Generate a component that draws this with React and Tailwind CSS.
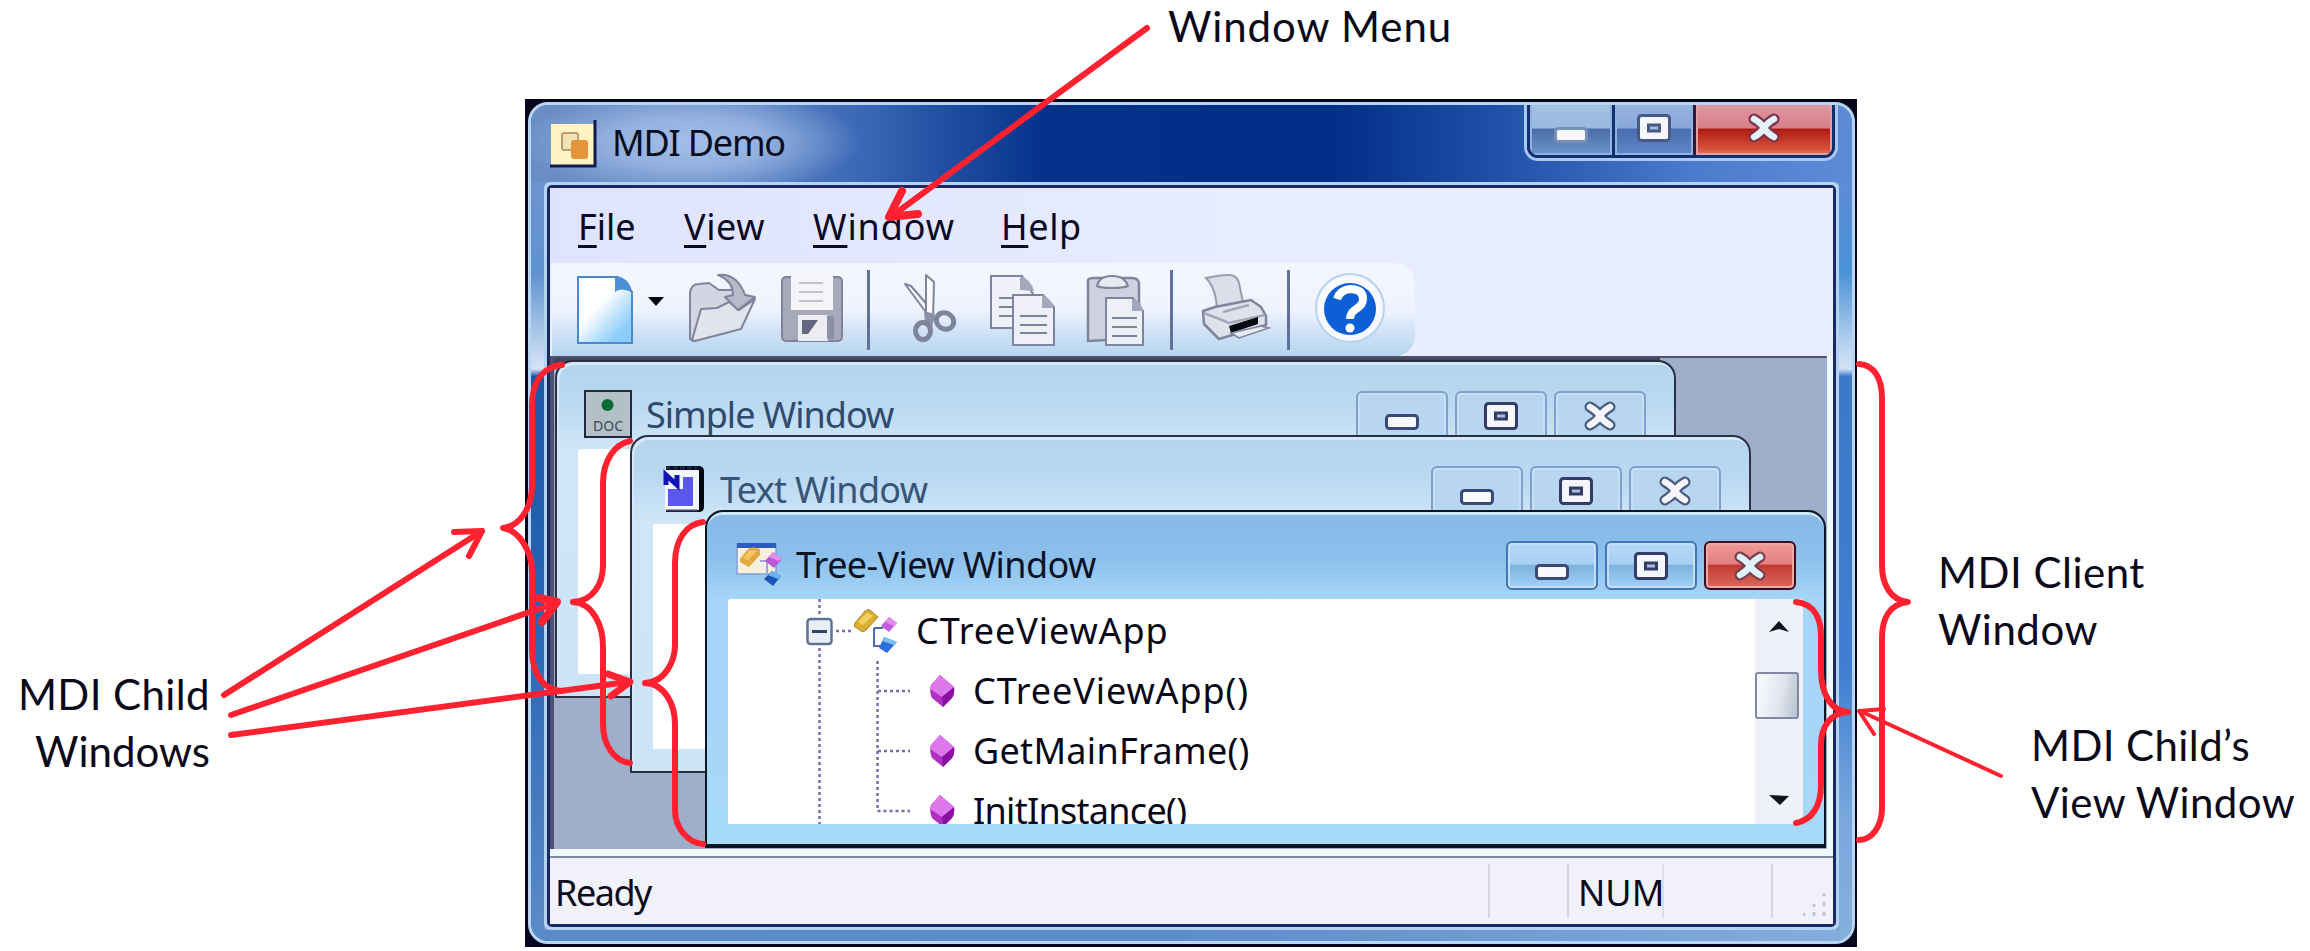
import React from 'react';

const FONT = "font-['Noto_Sans','Open_Sans',sans-serif]";

function MinGlyph({ dark }) {
  return (
    <svg width="34" height="50" viewBox="0 0 34 50" className="block">
      <rect x="1.5" y="24.5" width="31" height="13" rx="3" fill="#f6f8fd" stroke={dark} strokeWidth="3" />
    </svg>
  );
}

function MaxGlyph({ dark }) {
  return (
    <svg width="34" height="50" viewBox="0 0 34 50" className="block">
      <rect x="1.5" y="12.5" width="31" height="25" rx="3" fill="#f4f6fb" stroke={dark} strokeWidth="3" />
      <rect x="11.5" y="22" width="11" height="6" fill="#a9bcd8" stroke={dark} strokeWidth="3" />
    </svg>
  );
}

function CloseGlyph({ dark, fill = '#f4f6fb' }) {
  return (
    <svg width="34" height="50" viewBox="0 0 34 50" className="block">
      <g fill="none" strokeLinecap="round">
        <path d="M7 16 Q14 20 17 25 Q20 30 27 34 M27 16 Q20 20 17 25 Q14 30 7 34" stroke={dark} strokeWidth="11" />
        <path d="M7 16 Q14 20 17 25 Q20 30 27 34 M27 16 Q20 20 17 25 Q14 30 7 34" stroke={fill} strokeWidth="6.5" />
      </g>
    </svg>
  );
}

function ChildButtons({ active }) {
  const base = 'flex h-[49px] w-[92px] items-center justify-center rounded-[6px] border-2';
  const plain = active
    ? ' border-[#4374b4] bg-[linear-gradient(180deg,#b5d8f6_0%,#a8cff2_47%,#7db2e0_50%,#a4d2f5_100%)] shadow-[inset_0_0_0_2px_#c4e0f8]'
    : ' border-[#7f9fcd] bg-[#b9d6f0] shadow-[inset_0_0_0_2px_#c8e0f5]';
  const close = active
    ? ' border-[#3a1020] bg-[linear-gradient(180deg,#f09a98_0%,#e38080_46%,#c23a30_50%,#dc6a5c_100%)] shadow-[inset_0_0_0_2px_#f0a8a4]'
    : plain;
  return (
    <div className="mt-[29px] mr-[28px] flex gap-[7px]">
      <div className={base + plain}><MinGlyph dark="#3a4a78" /></div>
      <div className={base + plain}><MaxGlyph dark="#333c66" /></div>
      <div className={base + close}><CloseGlyph dark={active ? '#7a4050' : '#4a5a80'} fill={active ? '#dff0fb' : '#f4f6fb'} /></div>
    </div>
  );
}

function DocIcon() {
  return (
    <svg width="48" height="48" viewBox="0 0 48 48">
      <rect x="1" y="1" width="46" height="46" fill="#b4c0c8" stroke="#23283c" strokeWidth="2" />
      <circle cx="23.500" cy="15" r="6" fill="#0b6b34" />
      <text x="24" y="41" textAnchor="middle" fontSize="14" fontFamily="Noto Sans, sans-serif" fill="#3c4850">DOC</text>
    </svg>
  );
}

function NoteIcon() {
  return (
    <svg width="42" height="48" viewBox="0 0 42 48">
      <path d="M3 1 H37 Q41 2 41 6 V43 Q40 47 36 47 H3 V42 H33 V6 H3 Z" fill="#050510" />
      <rect x="2" y="5" width="34" height="40" fill="#f4f6ff" />
      <path d="M3 3 H34" stroke="#202848" strokeWidth="3" strokeDasharray="5 2" />
      <path d="M20 12 H30 V41 H5 V24 H20 Z" fill="#5b58ee" />
      <path d="M3 20 V10 L14 20 V10" stroke="#1414b4" strokeWidth="5" fill="none" />
      <path d="M3 45.500 H34" stroke="#3a4470" strokeWidth="2" />
    </svg>
  );
}

function ClassIcon() {
  return (
    <svg width="46" height="46" viewBox="0 0 46 46">
      <path d="M21 20 H30 M21 20 V38 H31" fill="none" stroke="#4a6ab8" strokeWidth="2" />
      <path d="M2 15 L12 3 Q15 1 17 2 L25 9 L13 22 Q10 25 8 23 L1 18 Z" fill="#dcae34" stroke="#a88428" strokeWidth="1" />
      <path d="M5 14 L14 5 L20 8 L10 17 Z" fill="#f2cf60" />
      <path d="M36 9 L44 15 L36 24 L28 18 Z" fill="#c35cdc" />
      <path d="M36 9 L44 15 L41 18 L32 14 Z" fill="#e28cf0" />
      <path d="M31 29 L44 34 L34 45 L26 40 Z" fill="#2a6fdc" />
      <path d="M31 29 L44 34 L41 37 L29 33 Z" fill="#7fc0f4" />
    </svg>
  );
}

function TreeWinIcon() {
  return (
    <svg width="48" height="46" viewBox="0 0 48 46">
      <rect x="1" y="2" width="39" height="30" fill="#f8f0dc" stroke="#7fa0d8" strokeWidth="1.500" />
      <rect x="1" y="1" width="39" height="5" fill="#2a5cc0" />
      <path d="M4 17 L12 7 Q17 4 24 7 L24 13 L13 25 L4 20 Z" fill="#e2aa3c" />
      <path d="M7 16 L14 8 L21 9 L12 18 Z" fill="#f0c868" />
      <path d="M24 19 H31 V31" stroke="#98a4e0" strokeWidth="2" fill="none" />
      <path d="M37 10 L46 17 L38 26 L29 19 Z" fill="#bf55d8" />
      <path d="M37 10 L46 17 L42 19 L33 15 Z" fill="#e090f0" />
      <path d="M36 29 L45 34 L37 44 L28 37 Z" fill="#1c56b8" />
      <path d="M36 29 L45 34 L42 37 L32 33 Z" fill="#6fb4ec" />
    </svg>
  );
}

function ChildWindow({ className, icon, title, titleClass, active, children }) {
  return (
    <section
      className={
        'absolute flex h-[338px] w-[1121px] flex-col overflow-hidden rounded-t-[18px] border-2 ' +
        (active
          ? 'border-b-[4px] border-[#081626] bg-[linear-gradient(180deg,#86b9e6_0%,#8cc0ec_14%,#a6d5f7_26%,#a6d8f8_100%)] shadow-[inset_0_4px_0_-1px_#cfe8fb] '
          : 'border-[#2c3044] bg-[linear-gradient(180deg,#b4d3ee_0%,#b9d8f1_12%,#cfe6f8_26%,#cde3f6_100%)] shadow-[inset_2px_3px_0_0_#d3e8f8] ') +
        className
      }
    >
      <header className="flex h-[87px] shrink-0">
        {icon}
        <h2 className={'mt-[26px] text-[36px] leading-[54px] whitespace-nowrap ' + titleClass}>{title}</h2>
        <div className="flex-1" />
        <ChildButtons active={active} />
      </header>
      <div className={'relative mx-[21px] h-[225px] rounded-t-[3px] bg-white ' + (active ? 'overflow-hidden' : '')}>{children}</div>
    </section>
  );
}

function Diamond() {
  return (
    <svg width="26" height="34" viewBox="0 0 26 34">
      <path d="M11 1 L25 13 Q26 20 23 24 L14 33 L3 24 Q0 18 2 11 Z" fill="#b030c4" />
      <path d="M11 1 L25 13 L13 23 L1 15 L2 11 Z" fill="#dd78ea" />
      <path d="M13 23 L25 13 Q26 20 23 24 L14 33 Z" fill="#8a10a4" />
    </svg>
  );
}

function TreeRow({ label, tracking }) {
  return (
    <div className="flex h-[60px] items-center">
      <div className="ml-[201px] w-[44px]"><Diamond /></div>
      <span className={'text-[36px] leading-[60px] whitespace-nowrap ' + tracking}>{label}</span>
    </div>
  );
}

function TreeView() {
  return (
    <div className="flex h-full text-[#080818]">
      <div className="relative flex-1">
        <svg className="absolute top-0 left-0" width="200" height="225" viewBox="0 0 200 225">
          <g stroke="#7a6cac" strokeWidth="2.500" strokeDasharray="3 3" fill="none">
            <path d="M91.500 0 V17 M91.500 49 V225" />
            <path d="M108 32 H124" />
            <path d="M149.500 62 V212 H182 M150 92 H182 M150 152 H182" />
          </g>
          <rect x="79.500" y="20" width="24" height="25" rx="3" fill="#e8eff6" stroke="#5c7396" strokeWidth="2.500" />
          <path d="M84 32.500 H99" stroke="#304468" strokeWidth="3" />
        </svg>
        <div className="mt-[2px] flex h-[60px] items-center">
          <div className="ml-[125px] w-[63px]"><ClassIcon /></div>
          <span className="text-[36px] leading-[60px] tracking-[0.900px]">CTreeViewApp</span>
        </div>
        <TreeRow label="CTreeViewApp()" tracking="tracking-[0.900px]" />
        <TreeRow label="GetMainFrame()" tracking="tracking-[0.300px]" />
        <TreeRow label="InitInstance()" tracking="tracking-[-0.700px]" />
      </div>
      <div className="flex w-[48px] flex-col items-center bg-[#eff1f9]">
        <svg className="mt-[22px]" width="20" height="12" viewBox="0 0 20 12"><path d="M10 0 L20 11 L10 8 L0 11 Z" fill="#10141e" /></svg>
        <div className="mt-[39px] mr-[4px] h-[47px] w-[44px] rounded-[3px] border-2 border-[#8288a4] bg-[linear-gradient(100deg,#f6f8fc_10%,#dfe4ec_60%,#b8c0ce_100%)]" />
        <svg className="mt-[76px]" width="20" height="11" viewBox="0 0 20 11"><path d="M0 0 L20 1 L11 10 Z" fill="#10141e" /></svg>
      </div>
    </div>
  );
}

function Sep({ className }) {
  return <div className={'h-[80px] w-[3px] bg-[#62719c] ' + className} />;
}

const G = '#7e849c';

function Toolbar() {
  return (
    <div className="flex h-[93px] bg-[#e8edff] pl-[2px]">
      <div className="flex h-full w-[863px] items-center rounded-r-[20px] bg-[linear-gradient(180deg,#f4f6ff_0%,#f0f3ff_50%,#cfe2f6_75%,#b6d6ef_100%)] pl-[24px]">
        <svg width="58" height="70" viewBox="0 0 58 70">
          <defs>
            <linearGradient id="page" x1="0.100" y1="0.100" x2="0.900" y2="1">
              <stop offset="0.350" stopColor="#fff" />
              <stop offset="0.850" stopColor="#8accfa" />
            </linearGradient>
          </defs>
          <path d="M2 2 H42 L56 17 V68 H2 Z" fill="url(#page)" stroke="#4a8ace" strokeWidth="2" />
          <path d="M39 2 H45 Q55 7 56 17 Q44 12 39 17 Z" fill="#4b8fd4" />
        </svg>
        <svg className="-mt-[16px] ml-[14px]" width="16" height="10" viewBox="0 0 16 10"><path d="M0 0 H16 L8 9 Z" fill="#05050c" /></svg>
        <svg className="ml-[23px] -mt-[4px]" width="70" height="70" viewBox="0 0 70 70">
          <path d="M3 66 V20 Q4 11 12 11 L22 10 L32 17 H46 L54 38 L50 56 L6 68 Z" fill="#d3d6e2" stroke={G} strokeWidth="2" />
          <path d="M5 67 L14 36 L30 35 L42 29 L52 37 L68 26 L54 56 L8 68 Z" fill="#e2e4ec" stroke={G} strokeWidth="2" strokeLinejoin="round" />
          <path d="M31 2 Q50 0 58 22 L68 24 L51 37 L38 24 L46 22 Q46 8 31 2 Z" fill="#b7bac8" stroke={G} strokeWidth="2" strokeLinejoin="round" />
        </svg>
        <svg className="-mt-[2px] ml-[23px]" width="64" height="68" viewBox="0 0 64 68">
          <rect x="2" y="2" width="60" height="64" rx="4" fill="#a6a9ba" stroke={G} strokeWidth="2" />
          <rect x="11" y="1" width="42" height="34" fill="#f4f4f9" />
          <path d="M19 8 H43 M19 17 H43 M19 26 H43" stroke="#bfc1cc" strokeWidth="2" />
          <rect x="18" y="40" width="30" height="26" fill="#ececf2" />
          <path d="M22 45 H38 L28 59 H22 Z" fill="#62667e" />
          <path d="M47 41 H54 V64 H47 Z" fill="#8c90a4" />
        </svg>
        <Sep className="ml-[23px]" />
        <svg className="ml-[32px] -mt-[4px]" width="56" height="70" viewBox="0 0 56 70">
          <path d="M3 11 L26 42 L28 35 L9 13 Z" fill="#fafaff" stroke={G} strokeWidth="2" strokeLinejoin="round" />
          <path d="M24 2 L32 9 L31 46 L24 42 Z" fill="#fafaff" stroke={G} strokeWidth="2" strokeLinejoin="round" />
          <path d="M22 38 L33 41 L30 55 L23 50 Z" fill="#8c91a8" />
          <ellipse cx="21" cy="58" rx="7.500" ry="8.500" fill="none" stroke={G} strokeWidth="5" />
          <ellipse cx="43" cy="48" rx="9" ry="8" transform="rotate(35 43 48)" fill="none" stroke={G} strokeWidth="5" />
        </svg>
        <svg className="ml-[31px]" width="67" height="72" viewBox="0 0 67 72">
          <path d="M2 2 H33 L44 20 V54 H2 Z" fill="#eff0f8" stroke={G} strokeWidth="2" />
          <path d="M31 2 Q42 5 45 17 L31 16 Z" fill="#a3a7bc" />
          <path d="M10 24 H24 M10 33 H24 M10 42 H24" stroke={G} strokeWidth="2" />
          <path d="M24 21 H54 L65 33 V71 H24 Z" fill="#eff0f7" stroke={G} strokeWidth="2" />
          <path d="M53 21 Q63 25 65 34 L53 34 Z" fill="#a3a7bc" />
          <path d="M31 42 H58 M31 51 H58 M31 59 H58" stroke={G} strokeWidth="2" />
        </svg>
        <svg className="ml-[29px]" width="60" height="72" viewBox="0 0 60 72">
          <path d="M3 6 Q4 4 9 4 H47 Q53 4 54 9 V66 H22 L3 67 Z" fill="#ced1de" stroke={G} strokeWidth="2.500" />
          <path d="M12 12 Q14 2 27 2 Q40 2 43 12 Q38 14 27 14 Q16 14 12 12 Z" fill="#e8e9f1" stroke={G} strokeWidth="2" />
          <path d="M21 24 H48 L58 37 V71 H21 Z" fill="#eff0f7" stroke={G} strokeWidth="2" />
          <path d="M47 24 Q57 28 58 37 H47 Z" fill="#a3a7bc" />
          <path d="M27 44 H52 M27 53 H52 M27 62 H52" stroke={G} strokeWidth="2" />
        </svg>
        <Sep className="ml-[25px]" />
        <svg className="ml-[28px] -mt-[6px]" width="70" height="68" viewBox="0 0 70 68">
          <path d="M5 5 Q20 2 26 2 Q36 1 38 10 L43 34 L16 40 Q16 16 5 5 Z" fill="#dcdfe9" stroke="#9a9caf" strokeWidth="2" />
          <path d="M2 38 L14 34 L50 27 L60 34 L65 43 V52 L18 66 L3 51 Z" fill="#dfe1eb" stroke={G} strokeWidth="2.500" strokeLinejoin="round" />
          <path d="M22 39 L48 32 M3 40 L28 50 L64 42" stroke="#a4a8ba" strokeWidth="2.500" fill="none" />
          <path d="M28 53 L57 44 V51 L30 60 Z" fill="#0a0a14" />
          <path d="M30 60 L60 53 L68 55 L38 65 Z" fill="#e9eaf2" stroke={G} strokeWidth="1.500" />
        </svg>
        <Sep className="ml-[16px]" />
        <svg className="-mt-[3px] ml-[24px]" width="72" height="72" viewBox="0 0 72 72">
          <circle cx="36" cy="36" r="34" fill="#f8f8ff" stroke="#b5d2f0" strokeWidth="2" />
          <circle cx="36" cy="37" r="26" fill="#0c5fd4" />
          <path d="M23 27 Q26 18 36 17 Q49 17 49 27 Q49 33 42 37 Q36 41 36 47" fill="none" stroke="#fff" strokeWidth="8" />
          <circle cx="36" cy="56" r="4.500" fill="#fff" />
        </svg>
      </div>
    </div>
  );
}

function MenuItem({ first, rest, className }) {
  return (
    <span className={'text-[36px] leading-[77px] whitespace-nowrap ' + className}>
      <span className="underline decoration-[3px] underline-offset-[5px]">{first}</span>{rest}
    </span>
  );
}

function CaptionButtons() {
  return (
    <div className="mt-[-4px] mr-[14px] flex h-[60px] rounded-b-[14px] border-x-[3px] border-b-[3px] border-[#a9c8f2]">
      <div className="flex overflow-hidden rounded-b-[11px] border-x-[3px] border-b-[3px] border-[#12306e]">
        <div className="flex w-[82px] justify-center bg-[linear-gradient(180deg,#a6c2e4_0%,#9ab9df_50%,#4a6da8_52%,#6d93cc_100%)] pt-[3px] shadow-[inset_0_0_0_2px_#8fb4e4]">
          <MinGlyph dark="#7890b8" />
        </div>
        <div className="w-[3px] bg-[#12306e]" />
        <div className="flex w-[78px] justify-center bg-[linear-gradient(180deg,#9ab6e0_0%,#88a8da_50%,#4a6cae_52%,#6288ca_100%)] pt-[2px] shadow-[inset_0_0_0_2px_#8fb4e4]">
          <MaxGlyph dark="#465a88" />
        </div>
        <div className="w-[3px] bg-[#321838]" />
        <div className="flex w-[136px] justify-center bg-[linear-gradient(180deg,#e09aa4_0%,#d8808a_50%,#ae1a14_52%,#d8503a_88%,#e07860_100%)] pt-[2px] shadow-[inset_0_0_0_2px_#e0a0a4]">
          <CloseGlyph dark="#7d3348" fill="#e4f2fb" />
        </div>
      </div>
    </div>
  );
}

function MainWindow() {
  return (
    <main className="mt-[99px] ml-[525px] h-[848px] w-[1332px] bg-[#06061c] pt-[3px] pr-[2px] pb-[3px] pl-[3px]">
      <div className="flex h-full flex-col overflow-hidden rounded-[20px] border-[3px] border-[#b9d5f4] bg-[#6b96d2]">
        <header className="flex h-[77px] shrink-0 bg-[radial-gradient(ellipse_170px_56px_at_160px_37px,rgba(170,196,236,0.9)_0%,rgba(165,192,234,0.75)_45%,rgba(120,155,215,0)_100%),linear-gradient(90deg,#6a8ec4_0%,#5a80c0_16%,#3b68b6_25%,#1d4ca0_32%,#04328b_39%,#002d86_60%,#1f4fa8_73%,#4b7bcc_88%,#5d8cd6_100%)]">
          <svg className="mt-[15px] ml-[18px]" width="49" height="49" viewBox="0 0 49 49">
            <rect x="2" y="4" width="44" height="42" fill="#fff3c2" />
            <path d="M46 0 V46 H1" fill="none" stroke="#101a4c" strokeWidth="3" />
            <rect x="13" y="13" width="16" height="17" rx="2" fill="#f3e2b4" stroke="#bb9c6c" strokeWidth="2" />
            <rect x="22" y="20" width="17" height="19" rx="3" fill="#e2953a" />
          </svg>
          <h1 className="mt-[10px] ml-[14px] text-[36px] leading-[56px] tracking-[-1.200px] whitespace-nowrap text-[#080c20]">MDI Demo</h1>
          <div className="flex-1" />
          <CaptionButtons />
        </header>
        <div className="flex h-[748px] shrink-0">
          <div className="w-[13px] bg-[linear-gradient(180deg,#6e93cf_0%,#5f92d0_12%,#c5daf1_23%,#d5e4f4_25%,#1d56a4_26%,#2a66b4_60%,#5b8ac8_100%)]" />
          <div className="w-[1295px] rounded-[6px] bg-[#b3d2f4] p-[3px]">
            <div className="h-[742px] rounded-[5px] border-[3px] border-[#1a2a60] bg-[#eef8ff]">
              <nav className="flex h-[75px] bg-[linear-gradient(90deg,#dfe3fd_0%,#e8edff_60%)] pl-[28px] text-[#0a0a24]">
                <MenuItem first="F" rest="ile" className="w-[106px]" />
                <MenuItem first="V" rest="iew" className="w-[129px] tracking-[0.600px]" />
                <MenuItem first="W" rest="indow" className="w-[188px] tracking-[0.900px]" />
                <MenuItem first="H" rest="elp" className="w-[100px] tracking-[0.600px]" />
              </nav>
              <Toolbar />
              <div className="relative h-[493px] w-[1277px] border-t-2 border-l-4 border-[#4c5270] bg-[#9fafcb]">
                <div className="absolute top-0 left-0 h-[8px] w-[1106px] bg-[#48435c]" />
                <ChildWindow
                  className="top-[2px] left-[1px]"
                  icon={<div className="mt-[28px] ml-[27px] w-[62px]"><DocIcon /></div>}
                  title="Simple Window"
                  titleClass="text-[#2f4a6c] tracking-[-1px]"
                />
                <ChildWindow
                  className="top-[77px] left-[76px]"
                  icon={<div className="mt-[28px] ml-[31px] w-[57px]"><NoteIcon /></div>}
                  title="Text Window"
                  titleClass="text-[#365578] tracking-[-0.700px]"
                />
                <ChildWindow
                  active
                  className="top-[152px] left-[151px]"
                  icon={<div className="mt-[30px] ml-[29px] w-[60px]"><TreeWinIcon /></div>}
                  title="Tree-View Window"
                  titleClass="text-[#0a1226] tracking-[-0.600px]"
                >
                  <TreeView />
                </ChildWindow>
              </div>
              <footer className="mt-[7px] flex h-[68px] items-center border-t-2 border-[#7d8aa8] bg-[#f0f1f9] pl-[5px] text-[36px] leading-[66px] text-[#0c0c1c]">
                <span className="w-[933px] pt-[3px] tracking-[-1.500px]">Ready</span>
                <span className="h-[54px] w-[79px] border-l-2 border-[#d3d5e2]" />
                <span className="flex h-[54px] w-[95px] items-center border-l-2 border-[#d3d5e2] pt-[3px] pl-[9px]">NUM</span>
                <span className="h-[54px] w-[109px] border-l-2 border-[#dcdfea]" />
                <span className="flex h-[54px] flex-1 items-end justify-end border-l-2 border-[#d3d5e2] pr-[6px]">
                  <svg width="24" height="26" viewBox="0 0 24 26"><path d="M21 1 V4 M21 10 V14 M21 20 V24 M11 12 V15 M11 20 V24 M1 21 V24" stroke="#c3c6d6" strokeWidth="3" /></svg>
                </span>
              </footer>
            </div>
          </div>
          <div className="w-[13px] bg-[linear-gradient(180deg,#5d8cd6_0%,#4a92d6_12%,#c5daf1_23%,#d0e0f5_25%,#3b78c8_26%,#3f7ed0_65%,#7aa8dc_85%,#84aedc_100%)]" />
        </div>
        <div className="flex-1 bg-[linear-gradient(90deg,#5b8ac8_0%,#5f8cca_50%,#84aedc_100%)]" />
      </div>
    </main>
  );
}

const LABEL = "absolute font-['Lato',sans-serif] text-[42px] leading-[57px] whitespace-nowrap text-[#0a0a1a]";

export default function App() {
  return (
    <div className={'relative h-[951px] w-[2310px] overflow-hidden bg-white ' + FONT}>
      <div className="flex">
        <MainWindow />
      </div>

      <p className={LABEL + ' top-[-2px] left-[1168px] tracking-[0.900px]'}>Window Menu</p>
      <p className={LABEL + ' top-[666px] right-[2100px] text-right'}><span className="tracking-[0.400px]">MDI Child</span><br />Windows</p>
      <p className={LABEL + ' top-[544px] left-[1938px] tracking-[0.500px]'}>MDI Client<br />Window</p>
      <p className={LABEL + ' top-[717px] left-[2031px] tracking-[0.400px]'}>MDI Child’s<br />View Window</p>

      <svg className="absolute top-0 left-0" width="2310" height="951" viewBox="0 0 2310 951" fill="none" stroke="#fe2230" strokeLinecap="round" strokeLinejoin="round">
        <g strokeWidth="6">
          <path d="M562 365 C545 366 532 380 532 405 V485 C532 508 520 526 503 528 C518 530 532 550 532 572 V650 C532 675 545 691 562 691" />
          <path d="M630 441 C615 444 603 460 603 483 V565 C603 584 593 601 573 602 C593 603 603 626 603 646 V724 C603 745 614 761 630 763" />
          <path d="M703 522 C686 524 675 540 675 563 V645 C675 660 666 682 645 683 C666 684 675 706 675 724 V810 C675 828 688 843 703 844" />
          <path d="M1796 602 C1814 604 1821 618 1821 636 V670 C1821 692 1830 711 1848 712 C1830 713 1821 727 1821 745 V785 C1821 806 1812 820 1796 823" />
          <path d="M1859 364 C1874 365 1882 378 1882 398 V565 C1882 584 1890 600 1908 602 C1890 604 1882 618 1882 638 V808 C1882 826 1872 840 1859 840" />
          <path d="M224 695 L482 531" />
          <path d="M231 715 L556 603" />
          <path d="M231 735 L628 682" />
          <path d="M1147 28 L892 216" />
        </g>
        <g strokeWidth="6">
          <path d="M454 532 L482 531 L469 556" />
          <path d="M539 598 L557 602 L542 622" strokeWidth="8" />
          <path d="M608 674 L630 682 L611 696" strokeWidth="7" />
          <path d="M902 191 L889 217 L918 214" strokeWidth="8" />
        </g>
        <path d="M2001 776 L1860 711 M1884 709 L1859 711 L1874 734" strokeWidth="4" />
      </svg>
    </div>
  );
}
